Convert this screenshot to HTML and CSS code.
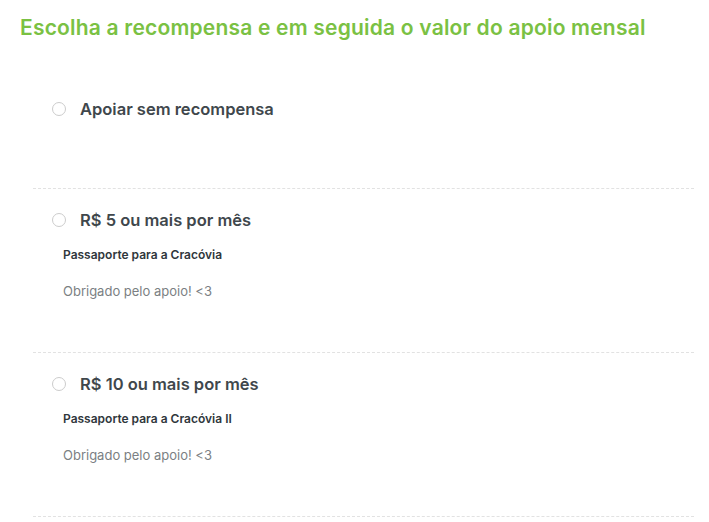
FILE: index.html
```html
<!DOCTYPE html>
<html lang="pt-BR">
<head>
<meta charset="utf-8">
<title>Recompensas</title>
<link rel="stylesheet" href="styles.css">
</head>
<body>
<div class="page">
  <h1 class="title">Escolha a recompensa e em seguida o valor do apoio mensal</h1>
  <ul class="options">
    <li class="option option-empty">
      <label class="option-head"><span class="radio"></span><span class="option-label">Apoiar sem recompensa</span></label>
    </li>
    <li class="option">
      <label class="option-head"><span class="radio"></span><span class="option-label">R$ 5 ou mais por mês</span></label>
      <div class="reward-title">Passaporte para a Cracóvia</div>
      <div class="reward-desc">Obrigado pelo apoio! &lt;3</div>
    </li>
    <li class="option">
      <label class="option-head"><span class="radio"></span><span class="option-label">R$ 10 ou mais por mês</span></label>
      <div class="reward-title">Passaporte para a Cracóvia II</div>
      <div class="reward-desc">Obrigado pelo apoio! &lt;3</div>
    </li>
  </ul>
</div>
</body>
</html>
```
FILE: styles.css
```css
html, body {
  margin: 0;
  padding: 0;
  background: #ffffff;
}
body {
  font-family: Inter, "Open Sans", sans-serif;
  color: #3d4449;
}
.page {
  padding: 0 15px 0 20px;
}
.title {
  margin: 15px 0 37px;
  font-size: 21px;
  line-height: 26px;
  font-weight: 600;
  letter-spacing: 0.2px;
  color: #7ac143;
}
.options {
  list-style: none;
  margin: 0 0 0 13px;
  padding: 0;
}
.option {
  padding: 20px 0 52px;
  border-bottom: 1px dashed #e2e2e2;
}
.option-empty {
  padding-bottom: 68px;
}
.option-head {
  display: flex;
  align-items: center;
  height: 22px;
  padding-left: 19px;
  gap: 14px;
}
.radio {
  width: 12px;
  height: 12px;
  border: 1px solid #cccccc;
  border-radius: 50%;
  flex: none;
}
.option-label {
  font-size: 16.5px;
  font-weight: 600;
  color: #40474c;
}
.reward-title {
  margin-top: 15px;
  padding-left: 30px;
  font-size: 12px;
  line-height: 18px;
  font-weight: 600;
  color: #30373c;
}
.reward-desc {
  margin-top: 18px;
  padding-left: 30px;
  font-size: 13px;
  line-height: 18px;
  color: #7b7f83;
}
```
